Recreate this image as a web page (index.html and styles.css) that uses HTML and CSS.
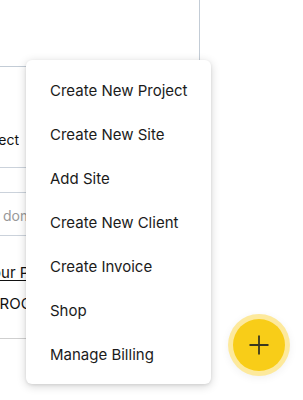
FILE: index.html
```html
<!DOCTYPE html>
<html>
<head>
<meta charset="utf-8">
<link rel="stylesheet" href="styles.css">
</head>
<body>
<div class="page">
  <div class="panel">
    <div class="top"></div>
    <div class="row row-select"><span class="clip"><span>Select</span></span></div>
    <div class="row row-gap"></div>
    <div class="row row-input"><span class="placeholder">domain name</span></div>
    <div class="row row-link"><a class="link" href="#">Your Projects</a></div>
    <div class="row row-status"><span class="status">PROCESSING</span></div>
  </div>

  <ul class="menu">
    <li class="item">Create New Project</li>
    <li class="item">Create New Site</li>
    <li class="item">Add Site</li>
    <li class="item">Create New Client</li>
    <li class="item">Create Invoice</li>
    <li class="item">Shop</li>
    <li class="item">Manage Billing</li>
  </ul>

  <button class="fab" aria-label="Add">
    <svg width="20" height="20" viewBox="0 0 20 20"><path d="M10 0.5V19.5M0.5 10H19.5" stroke="#3a3820" stroke-width="1.8" fill="none"/></svg>
  </button>
</div>
</body>
</html>
```

FILE: styles.css
```css
html, body {
  margin: 0;
  padding: 0;
  background: #fff;
}
body {
  font-family: Inter, "Noto Sans", sans-serif;
  color: #111;
}
.page {
  position: relative;
  width: 303px;
  height: 400px;
  overflow: hidden;
}
.panel {
  width: 200px;
  overflow: hidden;
}
.top {
  width: 200px;
  height: 67px;
  border-right: 1px solid #c3ccd6;
  border-bottom: 1px solid #c3ccd6;
  box-sizing: border-box;
}
.row {
  box-sizing: border-box;
  font-size: 14px;
  display: flex;
  align-items: center;
}
.row-select {
  height: 101px;
  border-bottom: 1px solid #cbd2db;
  align-items: flex-end;
  padding-bottom: 19px;
}
.clip {
  width: 19px;
  overflow: hidden;
  display: flex;
  justify-content: flex-end;
  white-space: nowrap;
}
.row-gap {
  height: 25px;
  border-bottom: 1px solid #cbd2db;
}
.row-input {
  height: 43px;
  border-bottom: 1px solid #cbd2db;
  padding-left: 3px;
  padding-top: 2px;
}
.placeholder {
  color: #999;
  white-space: nowrap;
}
.row-link {
  height: 46px;
  align-items: flex-end;
}
.link {
  color: #111;
  font-size: 15px;
  white-space: nowrap;
  margin-left: -17px;
  text-decoration: underline;
  text-underline-offset: 2px;
}
.row-status {
  height: 57px;
  border-bottom: 1px solid #cfcfcf;
  align-items: flex-start;
  padding-top: 12px;
}
.status {
  font-size: 15px;
  white-space: nowrap;
  margin-left: -10px;
}
.menu {
  position: absolute;
  left: 26px;
  top: 60px;
  width: 185px;
  margin: 0;
  padding: 8px 0;
  list-style: none;
  background: #fff;
  border-radius: 6px;
  box-shadow: 0 2px 10px rgba(0, 0, 0, 0.18), 0 1px 3px rgba(0, 0, 0, 0.08);
}
.item {
  height: 44px;
  display: flex;
  align-items: center;
  padding-left: 24px;
  font-size: 15px;
  color: #1b1b1b;
  white-space: nowrap;
}
.fab {
  position: absolute;
  left: 233px;
  top: 319px;
  width: 52px;
  height: 52px;
  border: none;
  border-radius: 50%;
  padding: 0;
  background: #f8cd18;
  box-shadow: 0 0 0 5px #fde99c, 0 2px 8px 5px rgba(0, 0, 0, 0.06);
  display: flex;
  align-items: center;
  justify-content: center;
}
.fab svg {
  display: block;
}
```
